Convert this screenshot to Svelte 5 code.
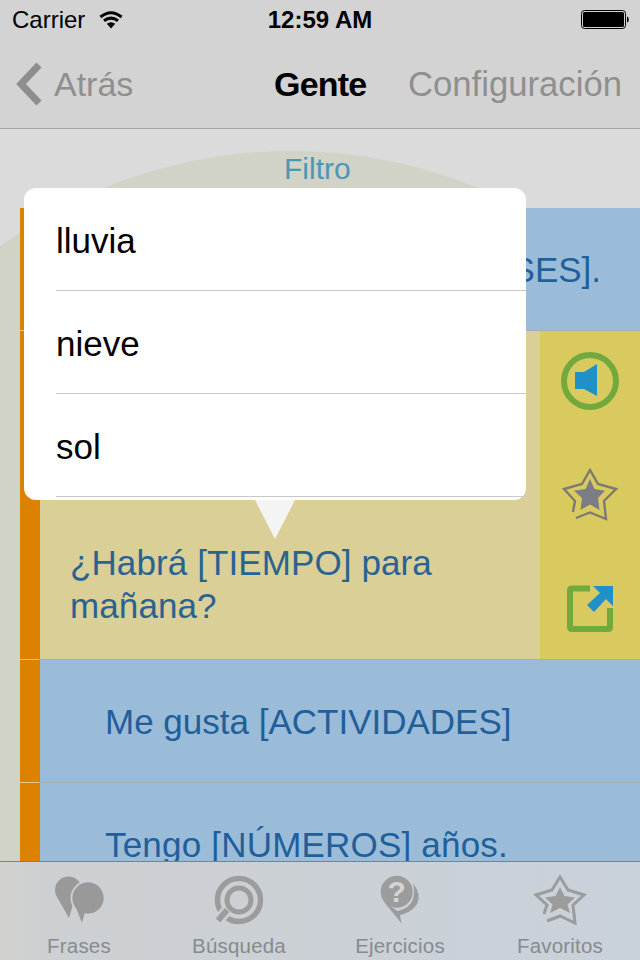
<script>
  const menu = ['lluvia', 'nieve', 'sol'];
  const tabs = ['Frases', 'Búsqueda', 'Ejercicios', 'Favoritos'];
</script>

<div class="screen">
  <div class="backdrop"></div>

  <header class="top">
    <div class="status">
      <div class="carrier">
        <span>Carrier</span>
        <svg width="24" height="18" viewBox="0 0 24 18">
          <path d="M12 17.5 L7.8 12.8 Q12 9.8 16.2 12.8 Z" fill="#000" />
          <path d="M5 9.8 Q12 4.4 19 9.8" fill="none" stroke="#000" stroke-width="3" />
          <path d="M1.4 6 Q12 -2.6 22.6 6" fill="none" stroke="#000" stroke-width="3" />
        </svg>
      </div>
      <div class="clock">12:59 AM</div>
      <svg class="battery" width="48" height="20" viewBox="0 0 48 20">
        <rect x="0.5" y="0.5" width="44" height="18" rx="3" fill="#d2d2d2" stroke="#000" />
        <rect x="2" y="2" width="41" height="15" rx="1.5" fill="#000" />
        <path d="M46 6.5 Q47.8 7 47.8 9.5 Q47.8 12 46 12.5 Z" fill="#000" />
      </svg>
    </div>
    <nav class="bar">
      <div class="back">
        <svg width="28" height="44" viewBox="0 0 28 44">
          <path d="M24 3 L6 22 L24 41" fill="none" stroke="#8e8e8e" stroke-width="7" />
        </svg>
        <span>Atrás</span>
      </div>
      <div class="title">Gente</div>
      <div class="config">Configuración</div>
    </nav>
  </header>

  <div class="filter">Filtro</div>

  <main class="list">
    <div class="row blue"><span>Me gustaría estudiar [CLASES].</span></div>
    <div class="row open">
      <div class="open-text">¿Habrá [TIEMPO] para<br />mañana?</div>
      <div class="actions">
        <svg width="60" height="60" viewBox="0 0 60 60">
          <circle cx="30" cy="30" r="26" fill="none" stroke="#72a93c" stroke-width="6" />
          <path d="M15 21 H24 L37 13 V45 L24 38 H15 Z" fill="#2090c8" />
        </svg>
        <svg width="56" height="54" viewBox="0 0 56 54">
          <path d="M11 44 L13 33 L2 21 L20 16 L28 2 L36 16 L54 21 L42 33 L44 51 L28 44.5 L14 50" fill="none" stroke="#7d7a72" stroke-width="2.4" />
          <path d="M28 11 L32.5 21 L43 22.7 L36 30 L37.5 42 L28 36.5 L18.5 42 L20 30 L12 22.7 L23.5 21 Z" fill="#7c7c84" />
        </svg>
        <svg width="50" height="50" viewBox="0 0 50 50">
          <path d="M25 4.5 H7 Q5 4.5 5 6.5 V43 Q5 45 7 45 H43 Q45 45 45 43 V24" fill="none" stroke="#72a93c" stroke-width="6" />
          <path d="M28 2 H48 V22 L41 15 L29 28 L22 21 L35 9 Z" fill="#2090c8" />
        </svg>
      </div>
    </div>
    <div class="row blue"><span>Me gusta [ACTIVIDADES]</span></div>
    <div class="row blue"><span class="wide">Tengo [NÚMEROS] años.</span></div>
  </main>

  <div class="popover">
    <ul>
      {#each menu as item}
        <li>{item}</li>
      {/each}
    </ul>
    <div class="arrow"></div>
  </div>

  <footer class="tabs">
    {#each tabs as tab, i}
      <div class="tab">
        <svg width="60" height="52" viewBox="0 0 60 52">
          {#if i === 0}
            <circle cx="19.5" cy="15" r="13.5" fill="#999" />
            <path d="M8 22 L20 43 L25 26 Z" fill="#999" />
            <circle cx="39" cy="23" r="17.5" fill="#cdd1d5" />
            <circle cx="39" cy="23" r="15.7" fill="#999" />
            <path d="M26 30 L33 48 L36 37 Z" fill="#999" />
          {:else if i === 1}
            <circle cx="30" cy="25" r="21.5" fill="none" stroke="#9c9c9c" stroke-width="5.5" />
            <path d="M18 35 L9 46" stroke="#ccd0d5" stroke-width="11" />
            <circle cx="30" cy="25" r="12" fill="none" stroke="#9c9c9c" stroke-width="5" />
            <path d="M18 35 L9 45.5" stroke="#9c9c9c" stroke-width="6" />
          {:else if i === 2}
            <circle cx="26.7" cy="16.7" r="16" fill="#9c9c9c" />
            <path d="M14 27 L32 49 L29 37 Z" fill="#9c9c9c" />
            <path d="M43 8 Q52 20 47 29 Q41 39 25 41 L28 36 Q40 33 43 24 Q45 16 43 8 Z" fill="#9c9c9c" />
            <text x="26.7" y="27" class="q">?</text>
          {:else}
            <path d="M14 39 L17 30 L6 20 L22 15 L30 2 L38 15 L54 20 L43 30 L45 48 L30 41 L17 46" fill="none" stroke="#9c9c9c" stroke-width="3" />
            <path d="M30 12 L34.5 21 L45 22.5 L37.5 29.5 L40 38 L30 33 L20 38 L22.5 29.5 L15 22.5 L25.5 21 Z" fill="#9c9c9c" />
          {/if}
        </svg>
        <span>{tab}</span>
      </div>
    {/each}
  </footer>
</div>

<style>
  :global(body) {
    margin: 0;
  }

  .screen {
    position: relative;
    width: 640px;
    height: 960px;
    overflow: hidden;
    background: #dbdbdb;
    font-family: "Liberation Sans", Arial, sans-serif;
  }

  .backdrop {
    position: absolute;
    left: -201px;
    top: 151px;
    width: 984px;
    height: 984px;
    border-radius: 50%;
    background: #d0d3c5;
  }

  .top {
    position: relative;
    height: 128px;
    background: #d3d3d3;
    border-bottom: 1px solid #a5a5a5;
  }

  .status {
    height: 40px;
    display: grid;
    grid-template-columns: 1fr auto 1fr;
    align-items: center;
    padding: 0 12px;
    font-size: 24px;
    color: #000;
  }

  .carrier {
    display: flex;
    align-items: center;
    gap: 14px;
  }

  .clock {
    font-weight: bold;
  }

  .battery {
    justify-self: end;
    margin-right: -1px;
  }

  .bar {
    height: 88px;
    display: flex;
    align-items: center;
    position: relative;
    font-size: 34px;
    color: #8f8f8f;
  }

  .back {
    display: flex;
    align-items: center;
    gap: 11px;
    margin-left: 15px;
  }

  .title {
    position: absolute;
    left: 274px;
    letter-spacing: -0.8px;
    font-weight: bold;
    color: #000;
  }

  .config {
    margin-left: auto;
    margin-right: 18px;
    font-size: 34.7px;
  }

  .filter {
    position: relative;
    height: 79px;
    padding-top: 23px;
    box-sizing: border-box;
    padding-left: 284px;
    font-size: 30px;
    color: #4a97b8;
  }

  .list {
    position: relative;
    margin-left: 20px;
  }

  .row {
    border-bottom: 1px solid;
    border-image: linear-gradient(90deg, #e6c68e 20px, #a5afb5 20px) 1;
  }

  .blue {
    height: 120px;
    padding: 2px 0 0 85px;
    background: linear-gradient(90deg, #dd8100 20px, #9abcd9 20px);
    display: flex;
    align-items: center;
    font-size: 35px;
    color: #215f9a;
  }

  .wide {
    letter-spacing: 0.2px;
  }

  .open {
    height: 328px;
    display: flex;
    background: linear-gradient(90deg, #dd8100 20px, #d9cf97 20px);
  }

  .open-text {
    flex: 1;
    padding: 210px 0 0 50px;
    font-size: 35px;
    letter-spacing: 0.1px;
    line-height: 43px;
    color: #2a6391;
  }

  .actions {
    width: 100px;
    background: #d9ca5f;
    display: grid;
    grid-template-rows: repeat(3, 114px);
    align-content: center;
    justify-items: center;
    align-items: center;
  }

  .popover {
    position: absolute;
    left: 24px;
    top: 188px;
    width: 502px;
    height: 312px;
    background: #fff;
    border-radius: 12px;
  }

  .popover ul {
    list-style: none;
    margin: 0;
    padding: 0;
  }

  .popover li {
    height: 98px;
    padding-top: 4px;
    margin-left: 32px;
    border-bottom: 1px solid #c8c8c8;
    display: flex;
    align-items: center;
    font-size: 35px;
    color: #000;
  }

  .arrow {
    position: absolute;
    left: 231px;
    top: 312px;
    width: 40px;
    height: 39px;
    background: #f4f4f5;
    clip-path: polygon(0 0, 100% 0, 50% 100%);
  }

  .tabs {
    position: absolute;
    left: 0;
    right: 0;
    top: 861px;
    height: 99px;
    border-top: 1px solid #6f8496;
    background: linear-gradient(90deg, #d2d2cf 0, #cdd0d2 40px, #c9d1da 100%);
    display: grid;
    grid-template-columns: 158px 162px 160px 160px;
    box-sizing: border-box;
  }

  .tab {
    display: flex;
    flex-direction: column;
    align-items: center;
    padding-top: 13px;
    font-size: 20.5px;
    letter-spacing: 0.2px;
    color: #878a8e;
    gap: 7px;
  }

  .q {
    font-size: 30px;
    font-weight: bold;
    fill: #d2d5d8;
    text-anchor: middle;
    font-family: "Liberation Sans", Arial, sans-serif;
  }
</style>
